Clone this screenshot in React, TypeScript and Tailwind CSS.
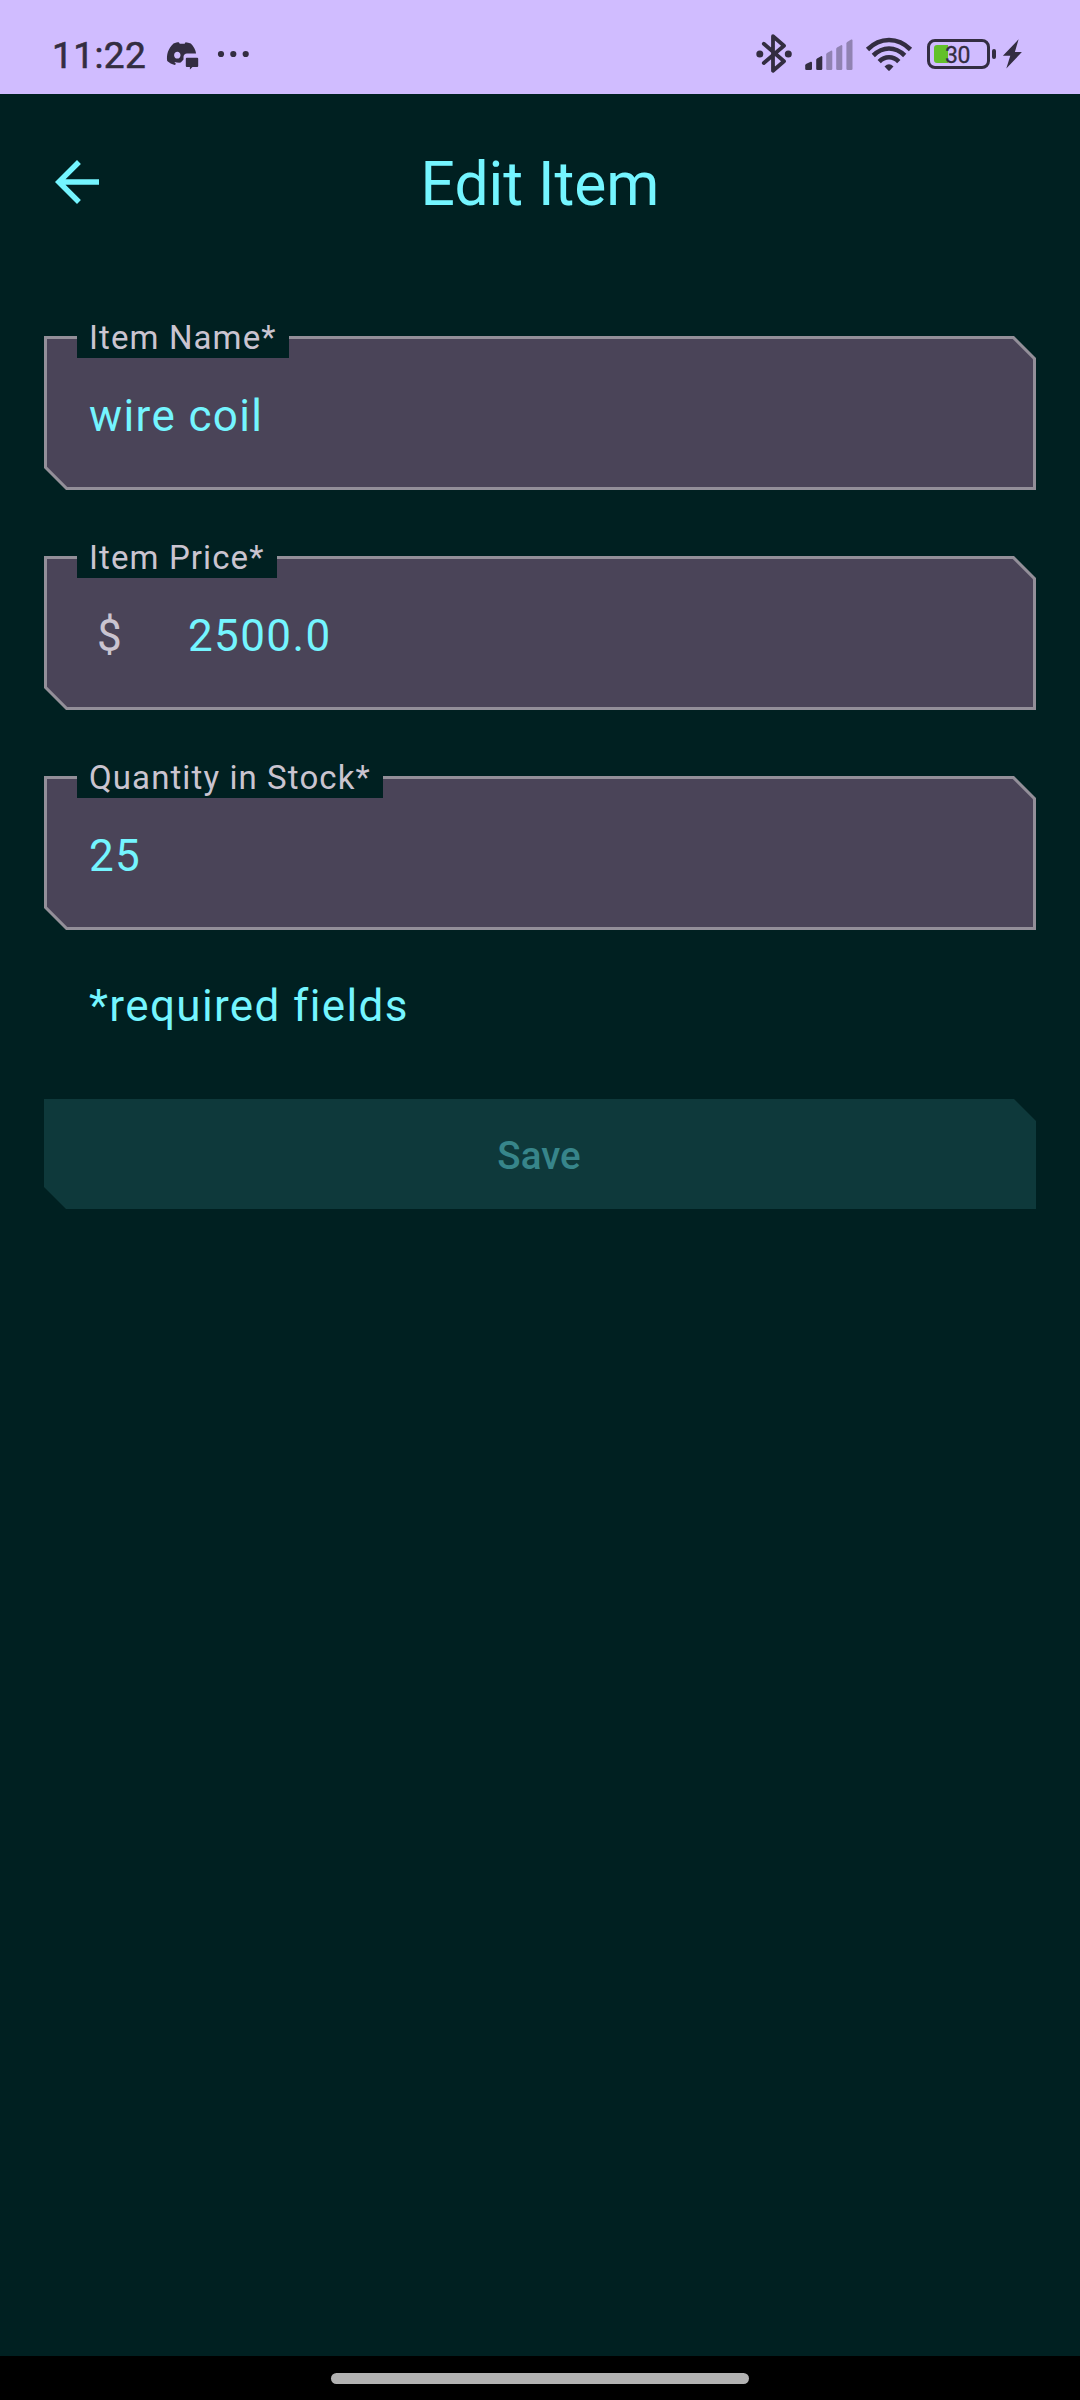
import type { ReactNode } from "react";

const DOT = "#332d41";

function DiscordIcon() {
  return (
    <svg className="ml-[21px]" width="33" height="94" viewBox="166 0 33 94" fill={DOT}>
      <path
        fillRule="evenodd"
        d="M173.500 43.600c2-.9 4-1.300 5.300-1.300l1 1.500c1.600-.2 3.200-.2 4.800 0l1-1.500c1.600.1 3.400.5 5.200 1.300 2.900 3 4.800 6.400 5.300 9.800H187c-2 0-3.500 1.300-3.500 3.400v2.600l-2.700 3.200c-2.200.1-4.300 0-6.400-.5l1.600 2-1.300.9c-2.800-.7-5.300-2-7.500-4-.8-6.400.8-12.100 6.300-17.400zM177.300 51.800c-1.800 0-3.200 1.500-3.200 3.400s1.400 3.400 3.200 3.400 3.200-1.500 3.200-3.400-1.400-3.400-3.200-3.400z"
      />
      <path d="M186.800 57.700h10.400q1 0 1 1v7.200q0 1-1 1h-4.700l-2.600 2.600v-2.600h-3.100q-1 0-1-1v-7.200q0-1 1-1z" />
    </svg>
  );
}

function MoreDots() {
  return (
    <svg className="ml-[18px]" width="34" height="94" viewBox="217 0 34 94" fill={DOT}>
      <circle cx="221" cy="54" r="3.100" />
      <circle cx="233.300" cy="54" r="3.100" />
      <circle cx="245.700" cy="54" r="3.100" />
    </svg>
  );
}

function BluetoothIcon() {
  return (
    <svg width="38" height="94" viewBox="755 0 38 94">
      <path
        d="M763.800 43.800L784 61.200L773 70.800V36.200L784 45.800L763.800 63"
        fill="none"
        stroke={DOT}
        strokeWidth="3.800"
        strokeLinecap="round"
        strokeLinejoin="round"
      />
      <circle cx="759.800" cy="54" r="3.500" fill={DOT} />
      <circle cx="788.300" cy="54" r="3.500" fill={DOT} />
    </svg>
  );
}

function SignalIcon() {
  return (
    <svg className="ml-[12px]" width="48" height="94" viewBox="805 0 48 94" fill={DOT}>
      <path d="M805.200 65.500q0-1 .8-1.500l4.700-2.300q1.300-.3 1.300 1v6q0 1.300-1.300 1.300h-4.200q-1.300 0-1.300-1.300z" />
      <path d="M816.200 60q0-1 .8-1.500l4-2.300q1.300-.5 1.300 1v11.500q0 1.300-1.300 1.300h-3.500q-1.300 0-1.300-1.300z" />
      <g opacity=".4">
        <path d="M826.200 54.500q0-1 .8-1.500l4-2.300q1.300-.5 1.300 1v17q0 1.300-1.300 1.300h-3.500q-1.300 0-1.300-1.300z" />
        <path d="M836.200 49q0-1 .8-1.500l4-2.300q1.300-.5 1.300 1v22.500q0 1.300-1.300 1.300h-3.500q-1.300 0-1.300-1.300z" />
        <path d="M846.400 43.400q0-1 .8-1.500l4-2.300q1.300-.5 1.300 1v28.100q0 1.300-1.300 1.300h-3.500q-1.300 0-1.300-1.300z" />
      </g>
    </svg>
  );
}

function WifiIcon() {
  return (
    <svg className="ml-[12px]" width="48" height="94" viewBox="865 0 48 94">
      <g fill="none" stroke={DOT} strokeWidth="4.600">
        <path d="M867.500 49.500Q877 40 889 40T910.500 49.500" />
        <path d="M873.300 55.500Q880.500 48.500 889 48.500T904.700 55.500" />
        <path d="M879.200 61.700Q883.500 57.300 889 57.300T898.800 61.700" />
      </g>
      <path d="M884.500 66.500Q889 61.800 893.500 66.500L889.700 70.600Q889 71.200 888.300 70.600z" fill={DOT} />
    </svg>
  );
}

function Battery() {
  return (
    <div className="ml-[14px] flex items-center pt-[14px]">
      <div className="flex h-[30px] w-[63px] items-center rounded-[8px] border-[3px] border-[#332d41] pl-1">
        <div className="h-[18px] w-[14px] rounded-l-[3px] bg-[#62c02b]" />
        <span className="-ml-[3px] pt-[3px] text-[23px] leading-[24px] tracking-[-0.5px] [-webkit-text-stroke:0.3px]">30</span>
      </div>
      <div className="ml-[2px] h-[10px] w-[4px] rounded-[2px] bg-[#332d41]" />
    </div>
  );
}

function BoltIcon() {
  return (
    <svg className="ml-[6px]" width="20" height="94" viewBox="1002 0 20 94" fill={DOT}>
      <path d="M1018.600 39.300L1002.900 55.800H1010.300L1006.300 68.500L1021.900 52H1014.900z" />
    </svg>
  );
}

function StatusBar() {
  return (
    <div className="flex h-[94px] items-center justify-between bg-[#d0bcff] pr-[58px] pl-[52px] text-[#332d41]">
      <div className="flex items-center">
        <span className="w-[93px] pt-[16px] text-[37px] leading-none tracking-[0.4px] whitespace-nowrap [-webkit-text-stroke:0.6px]">11:22</span>
        <DiscordIcon />
        <MoreDots />
      </div>
      <div className="flex items-center">
        <BluetoothIcon />
        <SignalIcon />
        <WifiIcon />
        <Battery />
        <BoltIcon />
      </div>
    </div>
  );
}

function Field({ label, prefix, children }: { label: string; prefix?: string; children: ReactNode }) {
  return (
    <div className="relative h-[154px] w-full">
      <div className="h-full bg-[#938f99] p-[3px] [clip-path:polygon(0_0,calc(100%-22px)_0,100%_22px,100%_100%,22px_100%,0_calc(100%-22px))]">
        <div className="flex h-full items-center bg-[#4a4458] px-[42px] pt-[5px] text-[44px] leading-[66px] tracking-[1.375px] text-[#74f5ff] [clip-path:polygon(0_0,calc(100%-20.24px)_0,100%_20.24px,100%_100%,20.24px_100%,0_calc(100%-20.24px))]">
          {prefix && <span className="w-[99px] pl-[8px] text-[#cac4d0]">{prefix}</span>}
          <span>{children}</span>
        </div>
      </div>
      <label className="absolute -top-[22px] left-[33px] h-[44px] bg-[#002021] px-[12px] pt-[3px] text-[33px] leading-[41px] tracking-[1.1px] whitespace-nowrap text-[#cac4d0]">
        {label}
      </label>
    </div>
  );
}

export default function App() {
  return (
    <div className="flex h-[2400px] w-[1080px] flex-col overflow-hidden bg-[#002021] font-[Roboto,sans-serif]">
      <StatusBar />
      <header className="grid h-[176px] grid-cols-[66px_1fr_66px] items-center px-[44px] text-[#74f5ff]">
        <svg width="66" height="66" viewBox="0 0 24 24" fill="currentColor">
          <path d="M20 11H7.830l5.590-5.590L12 4l-8 8 8 8 1.410-1.410L7.830 13H20v-2z" />
        </svg>
        <h1 className="pt-[5px] text-center text-[60.5px] leading-[77px]">Edit Item</h1>
      </header>
      <main className="flex grow flex-col px-[44px] pt-[66px]">
        <div className="flex flex-col gap-[66px]">
          <Field label="Item Name*">wire coil</Field>
          <Field label="Item Price*" prefix="$">
            2500.0
          </Field>
          <Field label="Quantity in Stock*">25</Field>
        </div>
        <p className="mt-[43px] pl-[45px] text-[44px] leading-[66px] tracking-[1.375px] text-[#74f5ff]">
          *required fields
        </p>
        <button className="mt-[60px] h-[110px] bg-[#0e393b] pt-[2px] pr-[2px] text-[38.5px] leading-[55px] font-medium text-[#37858a] [clip-path:polygon(0_0,calc(100%-22px)_0,100%_22px,100%_100%,22px_100%,0_calc(100%-22px))]">
          Save
        </button>
      </main>
      <div className="flex h-[44px] justify-center bg-black pt-[17px]">
        <div className="h-[11px] w-[418px] rounded-full bg-[#b2b2b2]" />
      </div>
    </div>
  );
}
